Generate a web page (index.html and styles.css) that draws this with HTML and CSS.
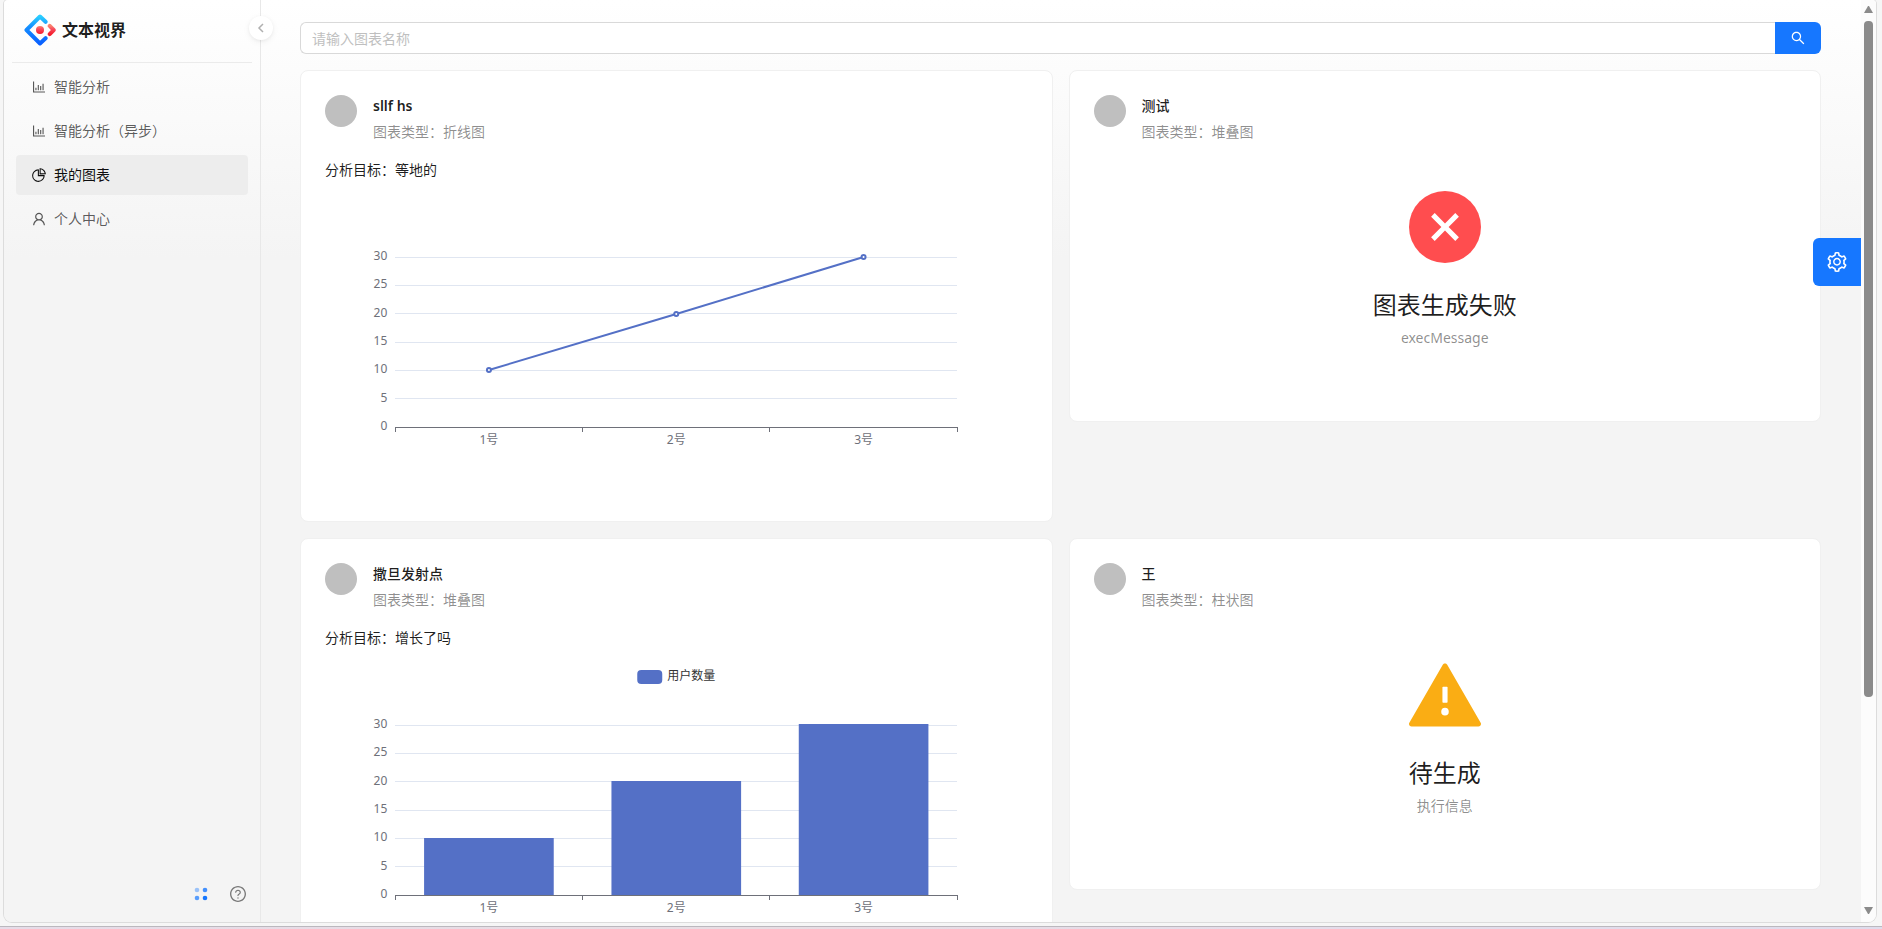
FILE: index.html
```html
<!DOCTYPE html>
<html lang="zh-CN">
<head>
<meta charset="utf-8">
<title>文本视界</title>
<link rel="stylesheet" href="styles.css">
</head>
<body>
<svg class="sprite" aria-hidden="true">
  <symbol id="i-bar" viewBox="64 64 896 896"><path d="M888 792H200V168c0-4.400-3.600-8-8-8h-56c-4.400 0-8 3.600-8 8v688c0 4.400 3.600 8 8 8h752c4.400 0 8-3.600 8-8v-56c0-4.400-3.600-8-8-8zm-600-80h56c4.400 0 8-3.600 8-8V560c0-4.400-3.600-8-8-8h-56c-4.400 0-8 3.600-8 8v144c0 4.400 3.600 8 8 8zm152 0h56c4.400 0 8-3.600 8-8V384c0-4.400-3.600-8-8-8h-56c-4.400 0-8 3.600-8 8v320c0 4.400 3.600 8 8 8zm152 0h56c4.400 0 8-3.600 8-8V462c0-4.400-3.600-8-8-8h-56c-4.400 0-8 3.600-8 8v242c0 4.400 3.600 8 8 8zm152 0h56c4.400 0 8-3.600 8-8V304c0-4.400-3.600-8-8-8h-56c-4.400 0-8 3.600-8 8v400c0 4.400 3.600 8 8 8z"/></symbol>
  <symbol id="i-pie" viewBox="64 64 896 896"><path d="M864 518H506V160c0-4.400-3.600-8-8-8h-26a398.460 398.460 0 00-282.800 117.100 398.190 398.190 0 00-85.700 127.100A397.610 397.610 0 0072 552a398.460 398.460 0 00117.100 282.800c36.700 36.700 79.500 65.600 127.100 85.700A397.610 397.610 0 00472 952a398.460 398.460 0 00282.800-117.100c36.700-36.700 65.600-79.500 85.700-127.100A397.610 397.610 0 00872 552v-26c0-4.400-3.600-8-8-8zM705.700 787.800A331.590 331.590 0 01470.400 884c-88.100-.4-170.900-34.900-233.200-97.200C174.500 724.100 140 640.700 140 552c0-88.700 34.500-172.100 97.200-234.800 54.600-54.600 124.900-87.900 200.800-95.500V586h364.300c-7.700 76.300-41.300 147-96.600 201.800zM952 462.400l-2.600-28.200c-8.500-92.100-49.400-179-115.200-244.600A399.400 399.400 0 00589 74.600L560.700 72c-4.700-.4-8.700 3.200-8.700 7.900V464c0 4.400 3.600 8 8 8l384-1c4.700 0 8.400-4 8-8.600zm-332.200-58.200V147.600a332.240 332.240 0 01166.400 89.800c45.700 45.600 77 103.600 90 166.100l-256.400.7z"/></symbol>
  <symbol id="i-user" viewBox="64 64 896 896"><path d="M858.500 763.600a374 374 0 00-80.600-119.500 375.630 375.630 0 00-119.500-80.600c-.4-.2-.8-.3-1.200-.5C719.500 518 760 444.700 760 362c0-137-111-248-248-248S264 225 264 362c0 82.700 40.500 156 102.800 201.100-.4.2-.8.3-1.200.5-44.800 18.900-85 46-119.500 80.600a375.630 375.630 0 00-80.600 119.500A371.700 371.700 0 00136 901.800a8 8 0 008 8.200h60c4.400 0 7.900-3.500 8-7.800 2-77.200 33-149.500 87.800-204.300 56.700-56.700 132-87.900 212.200-87.900s155.500 31.200 212.200 87.900C779 752.700 810 825 812 902.200c.1 4.400 3.600 7.800 8 7.800h60a8 8 0 008-8.200c-1-47.800-10.900-94.300-29.500-138.200zM512 534c-45.900 0-89.100-17.900-121.600-50.400S340 407.900 340 362c0-45.900 17.900-89.100 50.400-121.600S466.100 190 512 190s89.100 17.900 121.600 50.400S684 316.100 684 362c0 45.900-17.900 89.100-50.400 121.600S557.900 534 512 534z"/></symbol>
  <symbol id="i-search" viewBox="64 64 896 896"><path d="M909.600 854.500L649.900 594.800C690.200 542.700 712 479 712 412c0-80.200-31.300-155.400-87.900-212.100-56.600-56.700-132-87.900-212.100-87.900s-155.500 31.300-212.100 87.900C143.200 256.500 112 331.800 112 412c0 80.100 31.300 155.500 87.900 212.100C256.500 680.800 331.800 712 412 712c67 0 130.600-21.800 182.700-62l259.700 259.600a8.200 8.200 0 0011.600 0l43.600-43.500a8.200 8.200 0 000-11.600zM570.400 570.400C528 612.700 471.800 636 412 636s-116-23.300-158.400-65.600C211.300 528 188 471.800 188 412s23.300-116.100 65.600-158.400C296 211.300 352.200 188 412 188s116.100 23.200 158.400 65.600S636 352.200 636 412s-23.300 116.100-65.600 158.400z"/></symbol>
  <symbol id="i-setting" viewBox="64 64 896 896"><path d="M924.800 625.700l-65.500-56c3.100-19 4.700-38.400 4.700-57.800s-1.600-38.800-4.700-57.800l65.500-56a32.030 32.030 0 009.300-35.200l-.9-2.600a443.740 443.740 0 00-79.700-137.900l-1.800-2.100a32.120 32.120 0 00-35.100-9.500l-81.300 28.900c-30-24.600-63.500-44-99.700-57.600l-15.700-85a32.050 32.050 0 00-25.800-25.700l-2.700-.5c-52.100-9.400-106.900-9.400-159 0l-2.700.5a32.050 32.050 0 00-25.800 25.700l-15.800 85.400a351.860 351.860 0 00-99 57.400l-81.900-29.100a32 32 0 00-35.100 9.500l-1.800 2.100a446.020 446.020 0 00-79.700 137.900l-.9 2.600c-4.500 12.500-.8 26.500 9.300 35.200l66.300 56.600c-3.100 18.800-4.600 38-4.600 57.100 0 19.200 1.500 38.400 4.600 57.100L99 625.500a32.030 32.030 0 00-9.300 35.200l.9 2.600c18.100 50.400 44.900 96.900 79.700 137.900l1.800 2.100a32.120 32.120 0 0035.100 9.500l81.900-29.100c29.800 24.500 63.100 43.900 99 57.400l15.800 85.400a32.050 32.050 0 0025.800 25.700l2.700.5a449.400 449.400 0 00159 0l2.700-.5a32.050 32.050 0 0025.800-25.700l15.700-85a350 350 0 0099.700-57.600l81.300 28.900a32 32 0 0035.100-9.500l1.800-2.100c34.800-41.100 61.600-87.500 79.700-137.900l.9-2.600c4.500-12.300.8-26.300-9.300-35zM788.300 465.900c2.500 15.100 3.800 30.600 3.800 46.100s-1.300 31-3.800 46.100l-6.600 40.100 74.700 63.900a370.030 370.030 0 01-42.600 73.600L721 702.800l-31.400 25.800c-23.900 19.600-50.500 35-79.300 45.800l-38.100 14.300-17.900 97a377.500 377.500 0 01-85 0l-17.900-97.200-37.800-14.500c-28.500-10.800-55-26.200-78.700-45.700l-31.400-25.900-93.400 33.200c-17-22.900-31.200-47.600-42.600-73.600l75.500-64.500-6.500-40c-2.400-14.900-3.700-30.300-3.700-45.500 0-15.300 1.200-30.600 3.700-45.500l6.500-40-75.500-64.500c11.300-26.100 25.600-50.700 42.600-73.600l93.400 33.200 31.400-25.900c23.700-19.500 50.200-34.900 78.700-45.700l37.900-14.300 17.900-97.200c28.100-3.200 56.800-3.200 85 0l17.900 97 38.100 14.300c28.700 10.800 55.400 26.200 79.300 45.800l31.400 25.800 92.800-32.900c17 22.900 31.200 47.600 42.600 73.600L781.800 426l6.500 39.900zM512 326c-97.200 0-176 78.800-176 176s78.800 176 176 176 176-78.800 176-176-78.800-176-176-176zm79.200 255.200A111.600 111.600 0 01512 614c-29.900 0-58-11.700-79.200-32.800A111.600 111.600 0 01400 502c0-29.900 11.700-58 32.800-79.200C454 401.600 482.100 390 512 390c29.900 0 58 11.600 79.200 32.800A111.600 111.600 0 01624 502c0 29.900-11.700 58-32.800 79.200z"/></symbol>
  <symbol id="i-question" viewBox="64 64 896 896"><path d="M512 64C264.600 64 64 264.600 64 512s200.600 448 448 448 448-200.600 448-448S759.400 64 512 64zm0 820c-205.400 0-372-166.600-372-372s166.600-372 372-372 372 166.600 372 372-166.600 372-372 372z"/><path d="M623.600 316.700C593.600 290.400 554 276 512 276s-81.600 14.500-111.600 40.700C369.200 344 352 380.700 352 420v7.600c0 4.400 3.600 8 8 8h48c4.400 0 8-3.600 8-8V420c0-44.100 43.100-80 96-80s96 35.900 96 80c0 31.100-22 59.600-56.100 72.700-21.200 8.100-39.200 22.300-52.100 40.900-13.100 19-19.900 41.800-19.900 64.900V620c0 4.400 3.600 8 8 8h48c4.400 0 8-3.600 8-8v-22.700a48.300 48.300 0 0130.900-44.800c59-22.700 97.100-74.700 97.100-132.500.1-39.300-17.100-76-48.300-103.300zM472 732a40 40 0 1080 0 40 40 0 10-80 0z"/></symbol>
</svg>

<div class="window">
  <aside class="sider">
    <a class="brand" href="#">
      <svg class="logo" viewBox="0 0 32 32" aria-hidden="true">
        <defs>
          <linearGradient id="blue" x1="0" y1="0" x2="0" y2="1"><stop offset="0" stop-color="#29cdff"/><stop offset=".4" stop-color="#148eff"/><stop offset="1" stop-color="#0a60ff"/></linearGradient>
          <linearGradient id="red" x1="0" y1="0" x2="0" y2="1"><stop offset="0" stop-color="#fa816e"/><stop offset=".4" stop-color="#f74a5c"/><stop offset="1" stop-color="#f51d2c"/></linearGradient>
        </defs>
        <path d="M21.600 7.800L16 2.500 2.500 16 16 29.500l5.600-5.300" fill="none" stroke="url(#blue)" stroke-width="4" stroke-linecap="round" stroke-linejoin="round"/>
        <path d="M25.700 11.900L29.700 16l-4 4.100" fill="none" stroke="url(#red)" stroke-width="4" stroke-linecap="round" stroke-linejoin="round"/>
        <circle cx="16" cy="16" r="4" fill="url(#red)"/>
      </svg>
      <h1 class="brand-name">文本视界</h1>
    </a>
    <nav class="menu">
      <a class="menu-item" href="#"><svg class="icon"><use href="#i-bar"/></svg>智能分析</a>
      <a class="menu-item" href="#"><svg class="icon"><use href="#i-bar"/></svg>智能分析（异步）</a>
      <a class="menu-item active" href="#" aria-current="page"><svg class="icon"><use href="#i-pie"/></svg>我的图表</a>
      <a class="menu-item" href="#"><svg class="icon"><use href="#i-user"/></svg>个人中心</a>
    </nav>
    <div class="sider-foot">
      <svg class="dots" viewBox="0 0 14 14" aria-hidden="true">
        <circle cx="3" cy="3" r="2.300" opacity=".4"/><circle cx="11" cy="3" r="2.300" opacity=".8"/>
        <circle cx="3" cy="11" r="2.300" opacity=".7"/><circle cx="11" cy="11" r="2.300"/>
      </svg>
      <a class="help" href="#" aria-label="帮助"><svg class="icon-md"><use href="#i-question"/></svg></a>
    </div>
    <button class="collapse" type="button" aria-label="收起菜单">
      <svg class="chevron" viewBox="0 0 12 12"><path d="M8 2L4 6l4 4" fill="none" stroke="currentColor" stroke-width="1.500"/></svg>
    </button>
  </aside>

  <main class="main">
    <form class="search">
      <input class="search-input" type="text" placeholder="请输入图表名称" aria-label="图表名称">
      <button class="search-btn" type="button" aria-label="搜索"><svg class="icon"><use href="#i-search"/></svg></button>
    </form>
    <div class="cards">
      <article class="card">
        <header class="meta">
          <span class="avatar"></span>
          <div class="meta-text"><h2 class="meta-title" lang="en">sllf hs</h2><p class="meta-desc">图表类型：折线图</p></div>
        </header>
        <p class="goal">分析目标：等地的</p>
        <svg class="chart" role="img" aria-label="折线图">
          <svg class="plot" x="10%" width="80%" height="300">
            <g class="grid">
              <line x1="0" x2="100%" y1="60" y2="60"/><line x1="0" x2="100%" y1="88" y2="88"/><line x1="0" x2="100%" y1="116" y2="116"/><line x1="0" x2="100%" y1="145" y2="145"/><line x1="0" x2="100%" y1="173" y2="173"/><line x1="0" x2="100%" y1="201" y2="201"/>
            </g>
            <g class="axis">
              <line x1="0" x2="100%" y1="230" y2="230"/><line x1="0" x2="0" y1="230" y2="235"/><line x1="33.330%" x2="33.330%" y1="230" y2="235"/><line x1="66.670%" x2="66.670%" y1="230" y2="235"/><line x1="100%" x2="100%" y1="230" y2="235"/>
            </g>
            <g class="y-labels">
              <text x="-8" y="63">30</text><text x="-8" y="91">25</text><text x="-8" y="120">20</text><text x="-8" y="148">15</text><text x="-8" y="176">10</text><text x="-8" y="205">5</text><text x="-8" y="233">0</text>
            </g>
            <g class="x-labels">
              <text x="16.670%" y="247">1号</text><text x="50%" y="247">2号</text><text x="83.330%" y="247">3号</text>
            </g>
            <g class="series-line">
              <line x1="16.670%" y1="173" x2="50%" y2="117"/><line x1="50%" y1="117" x2="83.330%" y2="60"/>
              <circle cx="16.670%" cy="173" r="2"/><circle cx="50%" cy="117" r="2"/><circle cx="83.330%" cy="60" r="2"/>
            </g>
          </svg>
        </svg>
      </article>

      <article class="card">
        <header class="meta">
          <span class="avatar"></span>
          <div class="meta-text"><h2 class="meta-title">测试</h2><p class="meta-desc">图表类型：堆叠图</p></div>
        </header>
        <section class="result">
          <svg class="result-icon error" viewBox="64 64 896 896" aria-hidden="true"><circle cx="512" cy="512" r="448"/><path fill="#fff" d="M384 339L512 467 640 339 685 384 557 512 685 640 640 685 512 557 384 685 339 640 467 512 339 384z"/></svg>
          <h3 class="result-title">图表生成失败</h3>
          <p class="result-sub">execMessage</p>
        </section>
      </article>

      <article class="card">
        <header class="meta">
          <span class="avatar"></span>
          <div class="meta-text"><h2 class="meta-title">撒旦发射点</h2><p class="meta-desc">图表类型：堆叠图</p></div>
        </header>
        <p class="goal">分析目标：增长了吗</p>
        <svg class="chart" role="img" aria-label="堆叠图">
          <svg class="plot" x="50%" width="100" height="30">
            <rect class="bar" x="-39" y="5" width="25" height="14" rx="4"/><text class="legend" x="-9" y="15">用户数量</text>
          </svg>
          <svg class="plot" x="10%" width="80%" height="300">
            <g class="grid">
              <line x1="0" x2="100%" y1="60" y2="60"/><line x1="0" x2="100%" y1="88" y2="88"/><line x1="0" x2="100%" y1="116" y2="116"/><line x1="0" x2="100%" y1="145" y2="145"/><line x1="0" x2="100%" y1="173" y2="173"/><line x1="0" x2="100%" y1="201" y2="201"/>
            </g>
            <rect class="bar" x="5.130%" y="173" width="23.070%" height="57"/>
            <rect class="bar" x="38.470%" y="116" width="23.070%" height="114"/>
            <rect class="bar" x="71.800%" y="59" width="23.070%" height="171"/>
            <g class="axis">
              <line x1="0" x2="100%" y1="230" y2="230"/><line x1="0" x2="0" y1="230" y2="235"/><line x1="33.330%" x2="33.330%" y1="230" y2="235"/><line x1="66.670%" x2="66.670%" y1="230" y2="235"/><line x1="100%" x2="100%" y1="230" y2="235"/>
            </g>
            <g class="y-labels">
              <text x="-8" y="63">30</text><text x="-8" y="91">25</text><text x="-8" y="120">20</text><text x="-8" y="148">15</text><text x="-8" y="176">10</text><text x="-8" y="205">5</text><text x="-8" y="233">0</text>
            </g>
            <g class="x-labels">
              <text x="16.670%" y="247">1号</text><text x="50%" y="247">2号</text><text x="83.330%" y="247">3号</text>
            </g>
          </svg>
        </svg>
      </article>

      <article class="card">
        <header class="meta">
          <span class="avatar"></span>
          <div class="meta-text"><h2 class="meta-title">王</h2><p class="meta-desc">图表类型：柱状图</p></div>
        </header>
        <section class="result">
          <svg class="result-icon warning" viewBox="64 64 896 896" aria-hidden="true"><path d="M955.700 856l-416-720c-6.200-10.700-16.900-16-27.700-16s-21.600 5.300-27.700 16l-416 720C56 877.400 71.400 904 96 904h832c24.600 0 40-26.600 27.700-48zM480 416c0-4.400 3.600-8 8-8h48c4.400 0 8 3.600 8 8v184c0 4.400-3.600 8-8 8h-48c-4.400 0-8-3.600-8-8V416zm32 352a48.010 48.010 0 010-96 48.010 48.010 0 010 96z"/></svg>
          <h3 class="result-title">待生成</h3>
          <p class="result-sub">执行信息</p>
        </section>
      </article>
    </div>
    <button class="settings" type="button" aria-label="设置"><svg class="icon-lg"><use href="#i-setting"/></svg></button>
  </main>

  <div class="scrollbar" aria-hidden="true">
    <svg class="arrow" viewBox="0 0 9 7"><path d="M0 7L4 0h1l4 7z"/></svg>
    <div class="track"><div class="thumb"></div></div>
    <svg class="arrow" viewBox="0 0 9 7"><path d="M0 0L4 7h1l4-7z"/></svg>
  </div>
</div>
<div class="edge"></div>
</body>
</html>
```
FILE: styles.css
```css
* { box-sizing: border-box; }

body {
  margin: 0;
  height: 100vh;
  display: flex;
  flex-direction: column;
  overflow: hidden;
  background: #f6f6f6;
  color: rgba(0, 0, 0, .88);
  font: 14px/22px "Noto Sans", "Noto Sans CJK SC", sans-serif;
}

h1, h2, h3, p { margin: 0; }
a { color: inherit; text-decoration: none; }
button { border: 0; padding: 0; font: inherit; cursor: pointer; display: grid; place-items: center; }
svg { fill: currentColor; }

.sprite { display: none; }
.icon { width: 14px; height: 14px; flex: none; }
.icon-md { width: 16px; height: 16px; display: block; }
.icon-lg { width: 20px; height: 20px; }

.window {
  flex: 1;
  min-height: 0;
  display: flex;
  margin: 0 6px 4px 4px;
  border-radius: 4px 4px 8px 8px;
  overflow: hidden;
  background: linear-gradient(#fff, #f4f4f4 28%);
  box-shadow: 0 0 0 1px #dcdcdc;
}

.edge {
  height: 3px;
  border-top: 1px solid #bbb8be;
  background: linear-gradient(90deg, #e6dce8, #e8dde3 40%, #e4dcea 70%, #dedcec);
}

.sider {
  position: relative;
  z-index: 1;
  width: 257px;
  flex: none;
  display: flex;
  flex-direction: column;
  border-right: 1px solid #e8e8e8;
}

.brand {
  display: flex;
  align-items: center;
  gap: 6px;
  margin: 0 8px;
  padding: 14px 12px 16px;
  border-bottom: 1px solid #ebebeb;
}
.logo { width: 32px; height: 32px; }
.brand-name { font-size: 16px; line-height: 32px; font-weight: 600; }

.menu {
  flex: 1;
  display: flex;
  flex-direction: column;
  gap: 4px;
  padding: 4px 12px;
}
.menu-item {
  display: flex;
  align-items: center;
  gap: 8px;
  height: 40px;
  padding: 0 16px;
  border-radius: 4px;
  color: rgba(0, 0, 0, .65);
}
.menu-item.active { background: #ededed; color: rgba(0, 0, 0, .95); }

.sider-foot {
  display: flex;
  align-items: center;
  justify-content: flex-end;
  gap: 22px;
  padding: 0 14px 20px;
}
.dots { width: 14px; height: 14px; color: #1677ff; }
.help { color: rgba(0, 0, 0, .5); }

.collapse {
  position: absolute;
  top: 16px;
  right: -13px;
  width: 24px;
  height: 24px;
  border-radius: 50%;
  background: #fff;
  color: #b0b0b0;
  box-shadow: 0 2px 8px -2px rgba(0, 0, 0, .1), 0 1px 4px -1px rgba(25, 15, 15, .07);
}
.chevron { width: 12px; height: 12px; }

.main {
  position: relative;
  flex: 1;
  min-width: 0;
  padding: 22px 40px 0 39px;
  overflow: hidden;
}

.search { display: flex; margin-bottom: 16px; }
.search-input {
  flex: 1;
  min-width: 0;
  height: 32px;
  padding: 4px 11px;
  border: 1px solid #d9d9d9;
  border-right: 0;
  border-radius: 6px 0 0 6px;
  background: #fff;
  font: inherit;
}
.search-input::placeholder { color: #bfbfbf; opacity: 1; }
.search-btn {
  width: 46px;
  height: 32px;
  border-radius: 0 6px 6px 0;
  background: #1677ff;
  color: #fff;
}

.cards {
  display: grid;
  grid-template-columns: 1fr 1fr;
  gap: 16px;
  align-items: start;
}
.card {
  min-width: 0;
  padding: 24px;
  border: 1px solid #f0f0f0;
  border-radius: 8px;
  background: #fff;
}

.meta { display: flex; gap: 16px; }
.avatar { width: 32px; height: 32px; border-radius: 50%; background: #bfbfbf; }
.meta-title { margin-bottom: 4px; font-size: 14px; line-height: 22px; font-weight: 500; }
.meta-title:lang(en) { font-weight: 600; }
.meta-desc { color: rgba(0, 0, 0, .45); }
.goal { margin: 16px 0; }

.chart { display: block; width: 100%; height: 300px; font-size: 12px; }
.plot { overflow: visible; }
.grid line { stroke: #e0e6f1; shape-rendering: crispEdges; }
.axis line { stroke: #6e7079; shape-rendering: crispEdges; }
.y-labels { fill: #6e7079; text-anchor: end; }
.x-labels { fill: #6e7079; text-anchor: middle; }
.legend { fill: #333; }
.bar { fill: #5470c6; }
.series-line line { stroke: #5470c6; stroke-width: 2px; }
.series-line circle { fill: #fff; stroke: #5470c6; stroke-width: 2px; }

.result {
  display: flex;
  flex-direction: column;
  align-items: center;
  padding: 48px 32px;
}
.result-icon { width: 72px; height: 72px; margin-bottom: 24px; }
.error { color: #ff4d4f; }
.warning { color: #faad14; }
.result-title { margin-bottom: 4px; font-size: 24px; line-height: 36px; font-weight: 400; }
.result-sub { color: rgba(0, 0, 0, .45); }

.settings {
  position: absolute;
  top: 238px;
  right: 0;
  width: 48px;
  height: 48px;
  border-radius: 6px 0 0 6px;
  background: #1677ff;
  color: #fff;
}

.scrollbar {
  flex: none;
  width: 15px;
  display: flex;
  flex-direction: column;
  align-items: center;
  gap: 8px;
  padding: 6px 0 8px;
  background: #fcfcfc;
  color: #8b8b8b;
}
.arrow { width: 9px; height: 7px; }
.track { flex: 1; }
.thumb { width: 9px; height: 77%; border-radius: 4px; background: #8b8b8b; }
```
